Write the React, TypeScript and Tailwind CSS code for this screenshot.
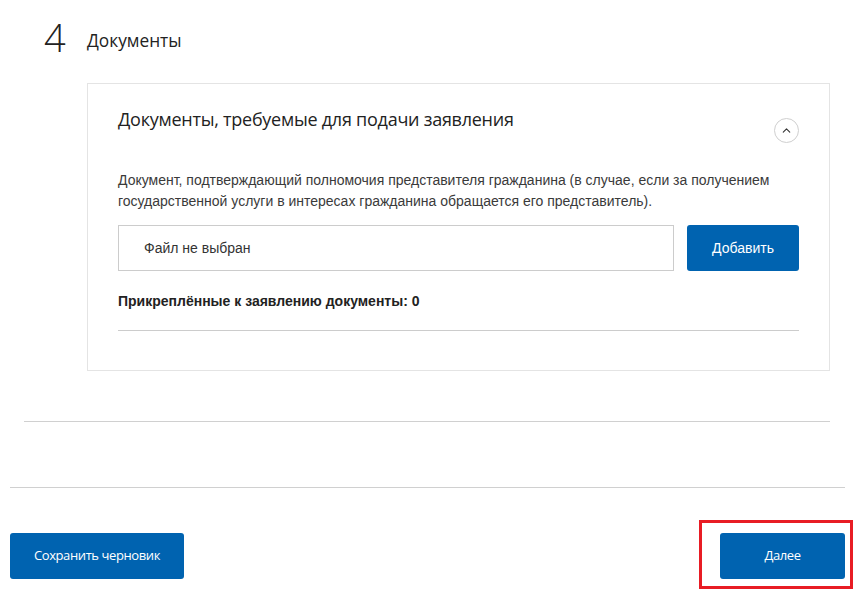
import { ChevronUp } from "lucide-react";

export default function App() {
  return (
    <div className="w-[856px] h-[605px] bg-white relative overflow-hidden font-['Liberation_Sans',Arial,sans-serif] text-[#222]">
      {/* step header */}
      <div className="flex items-end pl-[44px] pt-[14px] h-[56px]">
        <span className="font-['Open_Sans',sans-serif] font-light text-[38px] leading-none text-[#222] w-[43px]">4</span>
        <span className="font-['Open_Sans',sans-serif] text-[17.3px] leading-none pb-[7px]">Документы</span>
      </div>

      {/* card */}
      <div className="ml-[87px] mt-[27px] w-[743px] h-[288px] border border-[#e4e4e4] px-[30px]">
        <div className="flex justify-between pt-[23px]">
          <h2 className="font-['Open_Sans',sans-serif] text-[18px] leading-[24px] tracking-[-0.25px] text-[#222]">
            Документы, требуемые для подачи заявления
          </h2>
          <button
            type="button"
            className="mt-[11px] w-[25px] h-[25px] rounded-full border border-[#cfcfcf] flex items-center justify-center text-[#333]"
          >
            <ChevronUp size={13} strokeWidth={2} />
          </button>
        </div>

        <p className="mt-[27px] text-[14px] leading-[21px] text-[#3a3a3a]">
          Документ, подтверждающий полномочия представителя гражданина (в случае, если за получением
          государственной услуги в интересах гражданина обращается его представитель).
        </p>

        <div className="flex gap-[13px] mt-[13px]">
          <div className="flex-1 h-[46px] border border-[#cccccc] flex items-center pl-[25px] text-[14px] text-[#333]">
            Файл не выбран
          </div>
          <button
            type="button"
            className="w-[112px] h-[46px] rounded-[3px] bg-[#0063b0] text-white text-[14px]"
          >
            Добавить
          </button>
        </div>

        <div className="mt-[22px] text-[14px] leading-[17px] font-bold text-[#222]">
          Прикреплённые к заявлению документы: 0
        </div>
        <div className="mt-[20px] border-t border-[#cccccc]" />
      </div>

      <div className="ml-[24px] mr-[26px] mt-[50px] border-t border-[#d0d0d0]" />
      <div className="ml-[10px] mr-[11px] mt-[65px] border-t border-[#d0d0d0]" />

      {/* actions */}
      <div className="flex justify-between items-center pl-[10px] pr-[11px] mt-[45px]">
        <button
          type="button"
          className="w-[174px] h-[46px] rounded-[3px] bg-[#0063b0] text-white font-['Open_Sans',sans-serif] text-[13px] tracking-[-0.4px]"
        >
          Сохранить черновик
        </button>
        <div className="relative">
          <button
            type="button"
            className="w-[125px] h-[46px] rounded-[3px] bg-[#0063b0] text-white font-['Open_Sans',sans-serif] text-[13px] tracking-[-0.4px]"
          >
            Далее
          </button>
          <div className="absolute left-[-21px] top-[-13px] w-[154px] h-[69px] border-[3px] border-[#e81c24] pointer-events-none" />
        </div>
      </div>
    </div>
  );
}
